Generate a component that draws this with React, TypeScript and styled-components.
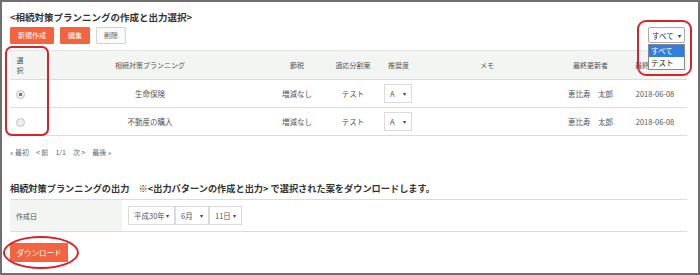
import styled, { createGlobalStyle } from "styled-components";

const GlobalStyle = createGlobalStyle`
  html, body {
    margin: 0;
    padding: 0;
    background: #fff;
    font-family: "Noto Sans CJK JP", "Noto Sans", sans-serif;
  }
`;

const ORANGE = "#f2643f";
const RED = "#d9232b";

const Page = styled.div`
  position: relative;
  box-sizing: border-box;
  width: 700px;
  height: 275px;
  border: 2px solid #707070;
  padding: 0 11px 0 8px;
  color: #555;
  overflow: hidden;
`;

const Title = styled.h1`
  margin: 8px 0 0;
  height: 14px;
  line-height: 14px;
  font-size: 9.5px;
  font-weight: 700;
  color: #333;
  white-space: nowrap;
`;

const ButtonRow = styled.div`
  display: flex;
  gap: 6px;
  margin-top: 3px;
`;

const Button = styled.button<{ $plain?: boolean }>`
  height: 17px;
  padding: 0 7px;
  border: 1px solid ${({ $plain }) => ($plain ? "#d4d4d4" : ORANGE)};
  border-radius: 1px;
  background: ${({ $plain }) => ($plain ? "#fafafa" : ORANGE)};
  color: ${({ $plain }) => ($plain ? "#555" : "#fff")};
  font-family: inherit;
  font-size: 7px;
  line-height: 15px;
`;

const Table = styled.table`
  width: 677px;
  margin-top: 6px;
  border-collapse: collapse;
  table-layout: fixed;
  font-size: 7.5px;
`;

const HeadCell = styled.th<{ $align?: string; $pl?: number }>`
  height: 28px;
  padding: 0 0 0 ${({ $pl }) => $pl ?? 0}px;
  background: #f3f5f2;
  border-top: 1px solid #e2e4e1;
  border-bottom: 1px solid #dcdcdc;
  font-weight: 400;
  font-size: 7px;
  line-height: 10px;
  color: #555;
  text-align: ${({ $align }) => $align ?? "center"};
  white-space: nowrap;
  overflow: hidden;
`;

const Cell = styled.td<{ $align?: string; $pl?: number }>`
  height: 27px;
  padding: 0 0 0 ${({ $pl }) => $pl ?? 0}px;
  border-bottom: 1px solid #dcdcdc;
  text-align: ${({ $align }) => $align ?? "center"};
  white-space: nowrap;
  color: #555;
`;

const Radio = styled.span<{ $checked?: boolean }>`
  display: inline-block;
  width: 7px;
  height: 7px;
  border-radius: 50%;
  border: 1px solid #c2c2c2;
  background: ${({ $checked }) =>
    $checked ? "radial-gradient(circle, #777 0 1.5px, #f0f0f0 2px)" : "#eee"};
  vertical-align: middle;
`;

const MiniSelect = styled.span<{ $w: number }>`
  display: inline-flex;
  align-items: center;
  justify-content: space-between;
  box-sizing: border-box;
  width: ${({ $w }) => $w}px;
  height: 19px;
  padding: 0 5px;
  border: 1px solid #dadada;
  background: #fff;
  font-size: 7.5px;
  color: #555;
  vertical-align: middle;

  &::after {
    content: "▾";
    font-size: 6px;
    color: #444;
  }
`;

const Pager = styled.div`
  display: flex;
  gap: 7px;
  margin-top: 11px;
  height: 10px;
  line-height: 10px;
  font-size: 7px;
  color: #666;
`;

const SectionTitle = styled.h2`
  margin: 24px 0 0;
  height: 14px;
  line-height: 14px;
  font-size: 9.2px;
  font-weight: 700;
  color: #333;
  white-space: pre;
`;

const FormRow = styled.div`
  display: flex;
  width: 677px;
  height: 33px;
  margin-top: 4px;
  border-top: 1px solid #dcdcdc;
  border-bottom: 1px solid #dcdcdc;
  box-sizing: border-box;
`;

const FormLabel = styled.div`
  width: 112px;
  padding-left: 6px;
  box-sizing: border-box;
  display: flex;
  align-items: center;
  background: #f3f5f2;
  font-size: 7px;
`;

const FormField = styled.div`
  display: flex;
  align-items: center;
  padding-left: 6px;
`;

const DownloadButton = styled.button`
  display: block;
  margin-top: 11px;
  height: 19px;
  width: 58px;
  padding: 0;
  border: none;
  background: ${ORANGE};
  color: #fff;
  font-family: inherit;
  font-size: 7.5px;
`;

// annotation overlays
const Mark = styled.div<{ $x: number; $y: number; $w: number; $h: number; $r: string }>`
  position: absolute;
  left: ${({ $x }) => $x - 2}px;
  top: ${({ $y }) => $y - 2}px;
  width: ${({ $w }) => $w}px;
  height: ${({ $h }) => $h}px;
  box-sizing: border-box;
  border: 2px solid ${RED};
  border-radius: ${({ $r }) => $r};
  pointer-events: none;
`;

const FilterBox = styled.div`
  position: absolute;
  left: 646px;
  top: 25px;
  width: 37px;
  background: #fff;
  font-size: 7.5px;
`;

const FilterSelect = styled.div`
  display: flex;
  justify-content: space-between;
  align-items: center;
  height: 14px;
  padding: 0 3px;
  border: 1px solid #a9a9a9;
  border-radius: 2px;
  color: #333;

  &::after {
    content: "▾";
    font-size: 6px;
  }
`;

const ListBox = styled.div`
  margin-top: 1px;
  border: 1px solid #888;
  background: #fff;
`;

const Option = styled.div<{ $active?: boolean }>`
  height: 12px;
  line-height: 12px;
  padding-left: 2px;
  background: ${({ $active }) => ($active ? "#2f7fdf" : "#fff")};
  color: ${({ $active }) => ($active ? "#fff" : "#222")};
`;

const rows = [
  { name: "生命保険", checked: true },
  { name: "不動産の購入", checked: false },
];

export default function App() {
  return (
    <>
      <GlobalStyle />
      <Page>
        <Title>&lt;相続対策プランニングの作成と出力選択&gt;</Title>
        <ButtonRow>
          <Button>新規作成</Button>
          <Button>編集</Button>
          <Button $plain>削除</Button>
        </ButtonRow>

        <Table>
          <colgroup>
            <col style={{ width: 20 }} />
            <col style={{ width: 240 }} />
            <col style={{ width: 54 }} />
            <col style={{ width: 58 }} />
            <col style={{ width: 58 }} />
            <col style={{ width: 94 }} />
            <col style={{ width: 89 }} />
            <col style={{ width: 64 }} />
          </colgroup>
          <thead>
            <tr>
              <HeadCell>
                選<br />択
              </HeadCell>
              <HeadCell>相続対策プランニング</HeadCell>
              <HeadCell>節税</HeadCell>
              <HeadCell>適応分割案</HeadCell>
              <HeadCell $align="left" $pl={6}>推奨度</HeadCell>
              <HeadCell>メモ</HeadCell>
              <HeadCell $pl={24}>最終更新者</HeadCell>
              <HeadCell $align="left" $pl={12}>最終更新日</HeadCell>
            </tr>
          </thead>
          <tbody>
            {rows.map((r) => (
              <tr key={r.name}>
                <Cell>
                  <Radio $checked={r.checked} />
                </Cell>
                <Cell>{r.name}</Cell>
                <Cell>増減なし</Cell>
                <Cell>テスト</Cell>
                <Cell $align="left" $pl={2}>
                  <MiniSelect $w={28}>A</MiniSelect>
                </Cell>
                <Cell />
                <Cell $pl={24}>恵比寿　太郎</Cell>
                <Cell>2018-06-08</Cell>
              </tr>
            ))}
          </tbody>
        </Table>

        <Pager>
          <span>« 最初</span>
          <span>&lt; 前</span>
          <span>1/1</span>
          <span>次 &gt;</span>
          <span>最後 »</span>
        </Pager>

        <SectionTitle>
          {"相続対策プランニングの出力　※<出力パターンの作成と出力> で選択された案をダウンロードします。"}
        </SectionTitle>

        <FormRow>
          <FormLabel>作成日</FormLabel>
          <FormField>
            <MiniSelect $w={47}>平成30年</MiniSelect>
            <MiniSelect $w={34}>6月</MiniSelect>
            <MiniSelect $w={33}>11日</MiniSelect>
          </FormField>
        </FormRow>

        <DownloadButton>ダウンロード</DownloadButton>

        <FilterBox>
          <FilterSelect>すべて</FilterSelect>
          <ListBox>
            <Option $active>すべて</Option>
            <Option>テスト</Option>
          </ListBox>
        </FilterBox>

        <Mark $x={5} $y={46} $w={44} $h={90} $r="7px" />
        <Mark $x={637} $y={20} $w={55} $h={56} $r="9px" />
        <Mark $x={3} $y={236} $w={76} $h={33} $r="50%" />
      </Page>
    </>
  );
}
